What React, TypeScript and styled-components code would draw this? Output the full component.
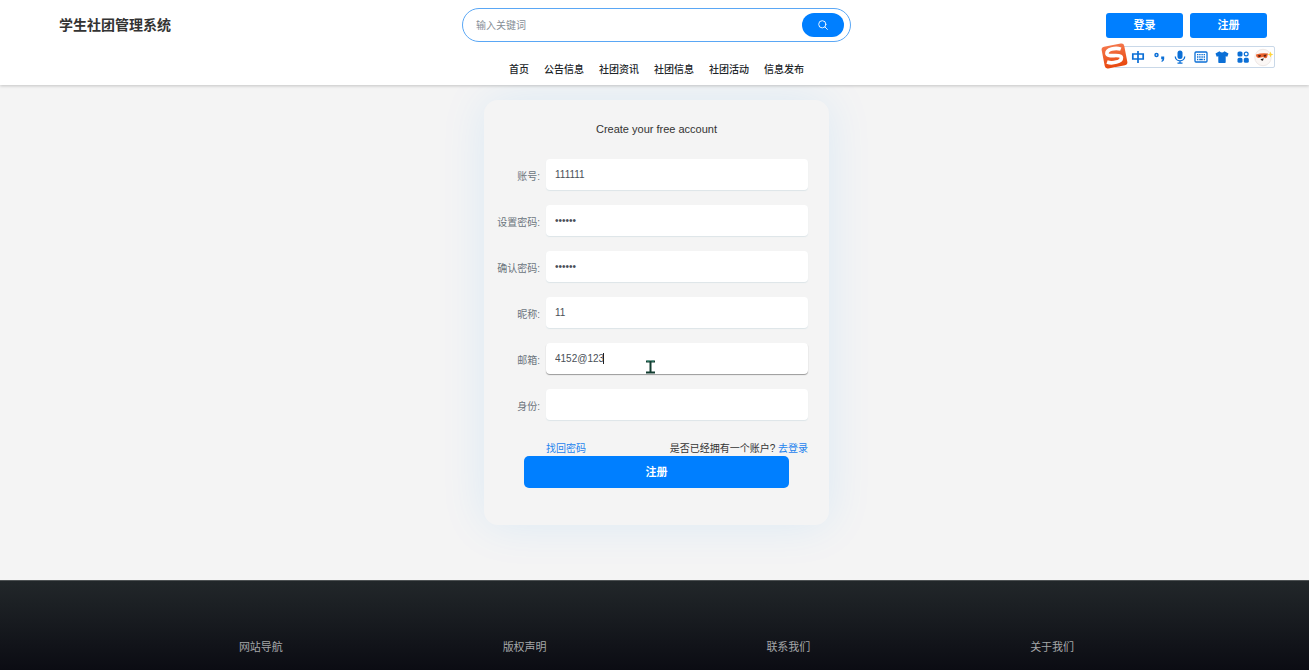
import React from "react";
import styled, { createGlobalStyle } from "styled-components";

const GlobalStyle = createGlobalStyle`
  * { box-sizing: border-box; }
  html, body { margin: 0; padding: 0; }
  body {
    background: #f4f4f4;
    color: #333;
    font-family: "Liberation Sans", "Noto Sans CJK SC", sans-serif;
    font-size: 10px;
    line-height: 16px;
  }
  button, input, select { font-family: inherit; font-size: inherit; }
  a { text-decoration: none; }
`;

const Page = styled.div`
  position: relative;
  display: flex;
  flex-direction: column;
  min-height: 100vh;
  overflow: hidden;
`;

const Header = styled.header`
  position: relative;
  z-index: 1;
  padding: 8px 0 7px 4px;
  background: #fff;
  box-shadow: 0 1px 3px rgba(0, 0, 0, 0.2);
`;

const TopBar = styled.div`
  display: grid;
  grid-template-columns: 1fr minmax(0, 389px) 1fr;
  align-items: center;
`;

const Brand = styled.h1`
  margin: 0;
  padding-left: 55px;
  font-size: 14px;
  line-height: 20px;
  font-weight: 700;
  color: #333;
`;

const SearchForm = styled.form`
  display: flex;
  align-items: center;
  height: 34px;
  padding: 0 6px 0 13px;
  border: 1px solid #5aa7f5;
  border-radius: 17px;
  background: #fff;
`;

const SearchInput = styled.input`
  flex: 1;
  min-width: 0;
  padding: 0;
  border: 0;
  outline: 0;
  background: transparent;
  color: #495057;
  &::placeholder { color: #868e96; opacity: 1; }
`;

const SearchButton = styled.button`
  display: flex;
  align-items: center;
  justify-content: center;
  width: 42px;
  height: 24px;
  padding: 0;
  border: 0;
  border-radius: 12px;
  background: #007fff;
`;

const Actions = styled.div`
  display: flex;
  justify-content: flex-end;
  gap: 7px;
  padding-right: 42px;
`;

const PrimaryButton = styled.button<{ $size: "small" | "wide" }>`
  width: ${(p) => (p.$size === "small" ? "77px" : "265px")};
  height: ${(p) => (p.$size === "small" ? "25px" : "32px")};
  padding: 0;
  border: 0;
  border-radius: ${(p) => (p.$size === "small" ? "3px" : "5px")};
  background: #007fff;
  color: #fff;
  font-size: 11px;
  line-height: 16px;
  font-weight: 700;
`;

const Nav = styled.nav`
  display: flex;
  justify-content: center;
  gap: 15px;
  margin-top: 20px;
`;

const NavLink = styled.a`
  color: #212529;
  font-weight: 500;
`;

const InputMethodBar = styled.aside`
  position: absolute;
  z-index: 2;
  top: 46px;
  right: 34px;
  display: flex;
  align-items: center;
  height: 22px;
  padding-left: 12px;
  border: 1px solid #c9d8e8;
  border-radius: 2px;
  background: #fff;
  color: #0b6fd6;
`;

const ImeLogo = styled.svg`
  position: absolute;
  top: -5px;
  left: -15px;
`;

const ImeItem = styled.span`
  display: flex;
  align-items: center;
  justify-content: center;
  width: 21px;
  height: 20px;
`;

const Main = styled.main`
  display: flex;
  justify-content: center;
  padding: 15px 0 55px 4px;
`;

const Card = styled.form`
  display: flex;
  flex-direction: column;
  width: 345px;
  padding: 21px 21px 37px 10px;
  border-radius: 14px;
  background: #f4f4f4;
  box-shadow: 0 0 46px rgba(24, 144, 255, 0.1);
`;

const CardTitle = styled.h2`
  margin: 0 0 22px;
  padding-left: 11px;
  font-size: 11px;
  line-height: 16px;
  font-weight: 400;
  text-align: center;
  color: #333;
`;

const Row = styled.div`
  position: relative;
  display: grid;
  grid-template-columns: 46px 1fr;
  column-gap: 6px;
  margin-bottom: 15px;
`;

const Label = styled.label`
  padding-top: 10px;
  text-align: right;
  white-space: nowrap;
  color: #6c757d;
`;

const fieldStyle = `
  width: 100%;
  height: 31px;
  padding: 0 9px;
  border: 0;
  border-radius: 4px;
  outline: 0;
  background: #fff;
  color: #495057;
`;

const TextField = styled.input<{ $active?: boolean }>`
  ${fieldStyle}
  box-shadow: 0 1px 1px ${(p) => (p.$active ? "#999" : "#dde5e8")};
`;

const SelectField = styled.select`
  ${fieldStyle}
  appearance: none;
  box-shadow: 0 1px 1px #dde5e8;
`;

const Caret = styled.span`
  position: absolute;
  top: 10px;
  left: 109px;
  width: 1px;
  height: 11px;
  background: #222;
`;

const Pointer = styled.svg`
  position: absolute;
  top: 17px;
  left: 152px;
`;

const LinksRow = styled.div`
  display: flex;
  justify-content: space-between;
  margin-top: 7px;
  padding-left: 52px;
  line-height: 14px;
`;

const TextLink = styled.a`
  color: #1d83ee;
`;

const SubmitRow = styled.div`
  display: flex;
  justify-content: center;
  padding-left: 11px;
`;

const Footer = styled.footer`
  flex: 1;
  padding: 58px 0 15px 4px;
  border-top: 1px solid #4e5254;
  background: linear-gradient(#22272a, #0b0c13);
`;

const FooterColumns = styled.ul`
  display: grid;
  grid-template-columns: repeat(4, 1fr);
  max-width: 1055px;
  margin: 0 auto;
  padding: 0;
  list-style: none;
  text-align: center;
  font-size: 11px;
  line-height: 16px;
  color: #a5a7a9;
`;

const navItems = ["首页", "公告信息", "社团资讯", "社团信息", "社团活动", "信息发布"];
const footerItems = ["网站导航", "版权声明", "联系我们", "关于我们"];

const fields = [
  { id: "account", label: "账号:", type: "text", value: "111111" },
  { id: "password", label: "设置密码:", type: "password", value: "111111" },
  { id: "confirm", label: "确认密码:", type: "password", value: "111111" },
  { id: "nickname", label: "昵称:", type: "text", value: "11" },
  { id: "email", label: "邮箱:", type: "text", value: "4152@123", active: true },
];

function ImeToolbar() {
  return (
    <InputMethodBar aria-label="输入法">
      <ImeLogo width="29" height="28" viewBox="0 0 29 28">
        <defs>
          <linearGradient id="ime-logo" x1="0" y1="0" x2="0" y2="1">
            <stop offset="0" stopColor="#f4764a" />
            <stop offset="1" stopColor="#e8480f" />
          </linearGradient>
        </defs>
        <g transform="rotate(-11 14.500 14)">
          <rect x="3" y="3" width="23" height="22" rx="3" fill="url(#ime-logo)" />
          <path
            d="M22 8.500C17 5.500 8 6 7.500 10.200C7.200 14.500 21 12.500 21 16.800C20.500 21 11 21.500 6 18.500"
            fill="none"
            stroke="#fff"
            strokeWidth="3.600"
          />
        </g>
      </ImeLogo>
      <ImeItem>
        <svg width="14" height="14" viewBox="0 0 14 14" fill="none" stroke="currentColor" strokeWidth="1.700">
          <path d="M1.800 4h10.400v5H1.800zM7 1v12" />
        </svg>
      </ImeItem>
      <ImeItem>
        <svg width="14" height="14" viewBox="0 0 14 14" fill="none" stroke="currentColor">
          <circle cx="4.500" cy="5" r="1.500" strokeWidth="1.500" />
          <path d="M9.200 6.500h3v2.500q0 2.200-2.300 3l-.6-1q1.200-.6 1.200-1.700H9.200z" fill="currentColor" stroke="none" />
        </svg>
      </ImeItem>
      <ImeItem>
        <svg width="14" height="14" viewBox="0 0 14 14" fill="none" stroke="currentColor" strokeWidth="1.300">
          <rect x="4.500" y="0.500" width="5" height="8.500" rx="2.500" fill="currentColor" stroke="none" />
          <path d="M2.300 6.500a4.700 4.300 0 0 0 9.400 0M7 10.800v2.500M4.500 13.200h5" />
        </svg>
      </ImeItem>
      <ImeItem>
        <svg width="14" height="14" viewBox="0 0 14 14" fill="none" stroke="currentColor" strokeWidth="1.300">
          <rect x="1" y="2" width="12" height="10" rx="1" />
          <path d="M3 4.700h8M3 7h8" strokeDasharray="1.400 0.800" />
          <path d="M3 9.500h1.300M5.200 9.500h3.600M9.700 9.500H11" />
        </svg>
      </ImeItem>
      <ImeItem>
        <svg width="14" height="14" viewBox="0 0 14 14" fill="currentColor">
          <path d="M4.500 1.200Q7 3.800 9.500 1.200L13.500 3.500L12.300 6.800L10.700 6.200V12.200Q10.700 13 9.900 13H4.100Q3.300 13 3.300 12.200V6.200L1.700 6.800L.5 3.500Z" />
        </svg>
      </ImeItem>
      <ImeItem>
        <svg width="14" height="14" viewBox="0 0 14 14" fill="currentColor">
          <rect x="1.500" y="1.500" width="5" height="5" rx="1.600" />
          <circle cx="10.200" cy="4" r="1.900" fill="none" stroke="currentColor" strokeWidth="1.200" />
          <rect x="1.500" y="7.800" width="5" height="5" rx="1.600" />
          <rect x="7.800" y="7.800" width="5" height="5" rx="1.600" />
        </svg>
      </ImeItem>
      <ImeItem>
        <svg width="20" height="20" viewBox="0 0 20 20">
          <circle cx="9" cy="10.500" r="8.200" fill="#fbf7f5" stroke="#eee8e6" />
          <path d="M2 7.500Q8 5.600 14 6.500L13 10.500Q11 12 9 10L4.500 11Q2 10.500 2 7.500Z" fill="#e9602c" />
          <path d="M4 8.300l3-.4-.8 2H4.600zM9.500 8l3-.4-1 2.200h-1.300z" fill="#5b2413" />
          <path d="M6.500 12.200l3.300-1-.8 2.300q-1.500.6-2.500-1.300z" fill="#2c2423" />
          <path d="M16.500 4.500l.8 2.200 2.200.8-2.200.8-.8 2.200-.8-2.200-2.200-.8 2.200-.8z" fill="#ffd43d" />
        </svg>
      </ImeItem>
    </InputMethodBar>
  );
}

export default function App() {
  return (
    <Page>
      <GlobalStyle />
      <Header>
        <TopBar>
          <Brand>学生社团管理系统</Brand>
          <SearchForm role="search" onSubmit={(e) => e.preventDefault()}>
            <SearchInput type="text" placeholder="输入关键词" aria-label="输入关键词" />
            <SearchButton type="submit" aria-label="搜索">
              <svg width="10" height="10" viewBox="0 0 10 10" fill="none" stroke="#fff" strokeWidth="0.900" strokeLinecap="round">
                <circle cx="4.300" cy="4.300" r="3.600" />
                <path d="M7 7l2.400 2.400" />
              </svg>
            </SearchButton>
          </SearchForm>
          <Actions>
            <PrimaryButton type="button" $size="small">登录</PrimaryButton>
            <PrimaryButton type="button" $size="small">注册</PrimaryButton>
          </Actions>
        </TopBar>
        <Nav>
          {navItems.map((item) => (
            <NavLink href="#" key={item}>{item}</NavLink>
          ))}
        </Nav>
      </Header>
      <ImeToolbar />
      <Main>
        <Card onSubmit={(e) => e.preventDefault()}>
          <CardTitle>Create your free account</CardTitle>
          {fields.map((f) => (
            <Row key={f.id}>
              <Label htmlFor={f.id}>{f.label}</Label>
              <TextField id={f.id} type={f.type} defaultValue={f.value} $active={f.active} />
              {f.active && (
                <>
                  <Caret />
                  <Pointer width="9" height="14" viewBox="0 0 9 14" fill="none">
                    <path d="M0 1.500h9M0 12.500h9" stroke="#123c30" strokeWidth="2" />
                    <path d="M4.500 1v12" stroke="#123c30" strokeWidth="2" />
                    <path d="M1 1h2.500M5.500 1H8" stroke="#3f9c83" />
                  </Pointer>
                </>
              )}
            </Row>
          ))}
          <Row>
            <Label htmlFor="role">身份:</Label>
            <SelectField id="role" defaultValue="">
              <option value="" />
            </SelectField>
          </Row>
          <LinksRow>
            <TextLink href="#">找回密码</TextLink>
            <span>
              是否已经拥有一个账户? <TextLink href="#">去登录</TextLink>
            </span>
          </LinksRow>
          <SubmitRow>
            <PrimaryButton type="submit" $size="wide">注册</PrimaryButton>
          </SubmitRow>
        </Card>
      </Main>
      <Footer>
        <FooterColumns>
          {footerItems.map((item) => (
            <li key={item}>{item}</li>
          ))}
        </FooterColumns>
      </Footer>
    </Page>
  );
}
